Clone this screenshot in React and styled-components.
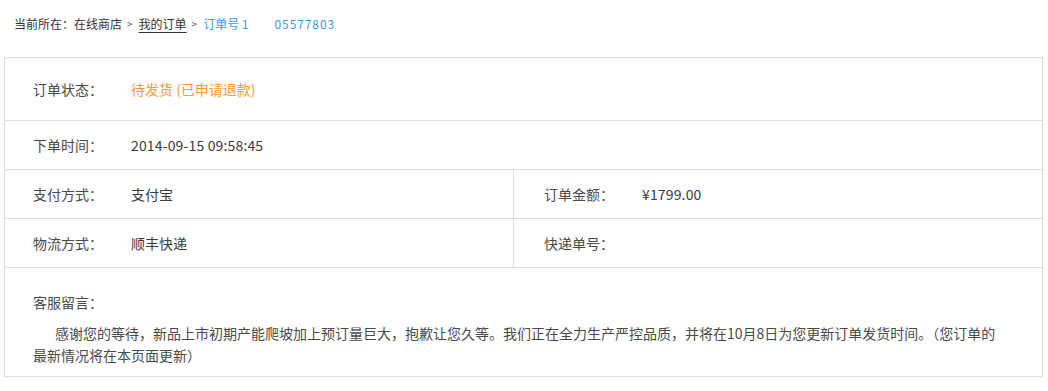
import React from "react";
import styled, { createGlobalStyle } from "styled-components";

const GlobalStyle = createGlobalStyle`
  html, body {
    margin: 0;
    padding: 0;
    background: #fff;
  }
  body {
    font-family: "Noto Sans CJK SC", "Noto Sans", sans-serif;
    color: #333;
  }
`;

// order data
const order = {
  status: "待发货 (已申请退款)",
  time: "2014-09-15 09:58:45",
  payment: "支付宝",
  amount: "¥1799.00",
  shipping: "顺丰快递",
  trackingNo: "",
  message:
    "感谢您的等待，新品上市初期产能爬坡加上预订量巨大，抱歉让您久等。我们正在全力生产严控品质，并将在10月8日为您更新订单发货时间。（您订单的最新情况将在本页面更新）"
};

const App = () => {
  return (
    <>
      <GlobalStyle />
      <Page>
        <Crumbs>
          <span>当前所在：在线商店</span>
          <Sep>&gt;</Sep>
          <CrumbLink href="#">我的订单</CrumbLink>
          <Sep>&gt;</Sep>
          <Current>
            订单号 1<OrderTail>05577803</OrderTail>
          </Current>
        </Crumbs>

        <Box>
          <Row $tall>
            <Cell>
              <Label>订单状态：</Label>
              <Value $accent>{order.status}</Value>
            </Cell>
          </Row>
          <Row>
            <Cell>
              <Label>下单时间：</Label>
              <Value $num>{order.time}</Value>
            </Cell>
          </Row>
          <Row>
            <Cell>
              <Label>支付方式：</Label>
              <Value>{order.payment}</Value>
            </Cell>
            <Cell $side>
              <Label>订单金额：</Label>
              <Value $num>{order.amount}</Value>
            </Cell>
          </Row>
          <Row>
            <Cell>
              <Label>物流方式：</Label>
              <Value>{order.shipping}</Value>
            </Cell>
            <Cell $side>
              <Label>快递单号：</Label>
              <Value>{order.trackingNo}</Value>
            </Cell>
          </Row>
          <Message>
            <Label>客服留言：</Label>
            <Note>{order.message}</Note>
          </Message>
        </Box>
      </Page>
    </>
  );
};

export default App;

const Page = styled.div`
  padding: 0 5px 0 4px;
`;

const Crumbs = styled.div`
  height: 57px;
  padding-left: 10px;
  display: flex;
  align-items: center;
  font-size: 12px;
  color: #333;
  padding-bottom: 10px;
  box-sizing: border-box;
`;

const Sep = styled.span`
  font-size: 10px;
  color: #555;
  margin: 0 6px 0 5px;
`;

const CrumbLink = styled.a`
  color: #333;
  text-decoration: underline;
  text-underline-offset: 3px;
`;

const Current = styled.span`
  color: #3a9be2;
`;

const OrderTail = styled.span`
  margin-left: 26px;
  letter-spacing: 0.9px;
`;

const Box = styled.div`
  border: 1px solid #ddd;
`;

const Row = styled.div`
  display: flex;
  height: ${(p) => (p.$tall ? "62px" : "48px")};
  border-bottom: 1px solid #ddd;
`;

const Cell = styled.div`
  flex: ${(p) => (p.$side ? "0 0 529px" : "1")};
  display: flex;
  align-items: center;
  padding-left: ${(p) => (p.$side ? "30px" : "28px")};
  border-left: ${(p) => (p.$side ? "1px solid #ddd" : "none")};
  box-sizing: border-box;
  font-size: 14px;
`;

const Label = styled.span`
  display: inline-block;
  width: 98px;
  flex: 0 0 98px;
  color: #4a4a4a;
  font-size: 14px;
  line-height: 22px;
`;

const Value = styled.span`
  color: ${(p) => (p.$accent ? "#ff9a2e" : "#3c3c3c")};
  font-size: 14px;
  letter-spacing: ${(p) => (p.$num ? "0.15px" : "0")};
`;

const Message = styled.div`
  padding: 21px 37px 10px 28px;
`;

const Note = styled.p`
  margin: 9px 0 0;
  font-size: 14px;
  line-height: 22px;
  color: #4a4a4a;
  text-indent: 22px;
`;
